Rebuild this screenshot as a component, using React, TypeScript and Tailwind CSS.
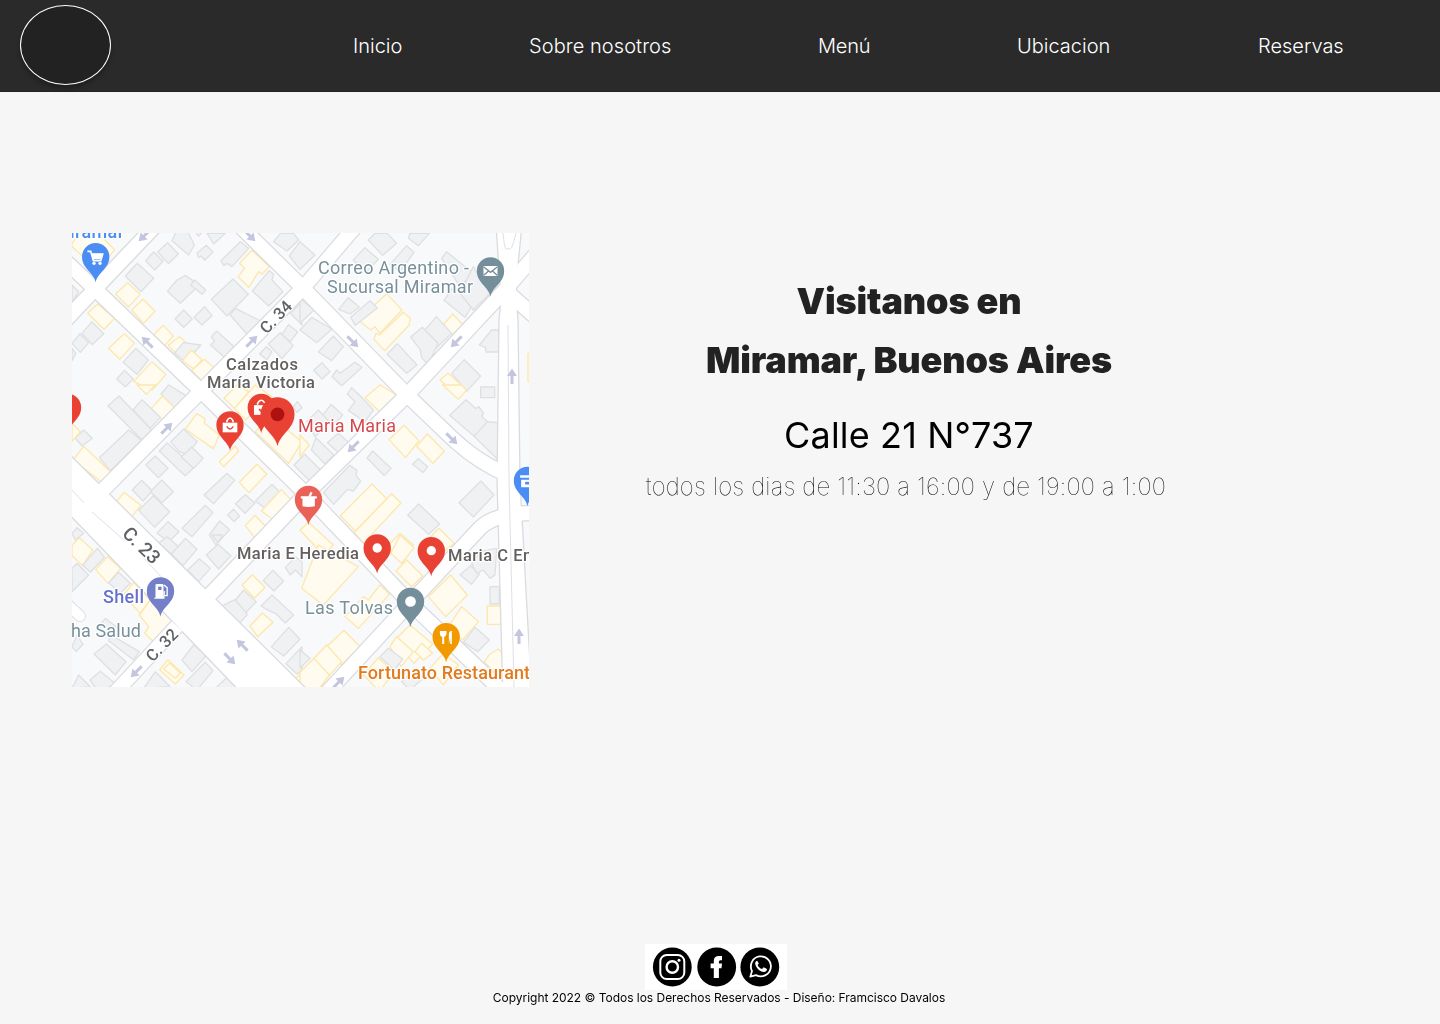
import React from "react";

type Shape = [string, string];

const links = [
  { label: "Inicio", box: "w-[176px]" },
  { label: "Sobre nosotros", box: "w-[289px] tracking-[0.07px]" },
  { label: "Menú", box: "w-[199px] tracking-[-0.2px]" },
  { label: "Ubicacion", box: "w-[241px]" },
  { label: "Reservas", box: "w-[120px]" },
];

/* Each sheet is drawn at three times map scale; g = grey building, y = commercial building. */
const sheets: { at: string; shapes: Shape[] }[] = [
  {
    at: "translate(72 230) scale(.33333)",
    shapes: [
      ["y", "0,40 25,5 75,5 128,60 112,78 80,45 50,95 0,50"],
      ["g", "196,100 245,145 207,185 160,138"],
      ["g", "245,66 273,94 248,120 221,92"],
      ["g", "287,38 319,72 289,101 257,66"],
      ["g", "315,0 345,0 367,45 350,75 300,32"],
      ["g", "403,46 423,66 398,91 388,78 380,82 375,69"],
      ["g", "365,0 395,0 380,18"],
      ["g", "405,10 425,42 460,10"],
      ["g", "505,35 530,55 480,110 465,100 455,107 447,92"],
      ["y", "540,61 592,110 570,132 560,125 530,172 498,140 518,115 503,100"],
      ["g", "340,137 368,155 372,175 325,220 286,184 315,150"],
      ["g", "368,150 401,180 390,193 356,165"],
      ["g", "483,147 529,193 465,258 418,208"],
      ["g", "592,122 605,133 600,150 633,185 590,228 541,183"],
      ["g", "490,235 560,270 567,280 530,318 474,255"],
      ["g", "605,35 625,10 665,10 680,30 645,63"],
      ["g", "690,215 655,250 690,285"],
      ["g", "335,240 361,267 335,292 309,267"],
      ["g", "398,230 420,257 390,285 366,262"],
      ["y", "167,158 204,193 169,231 131,192"],
      ["y", "213,208 249,244 215,280 179,240"],
      ["y", "77,222 128,265 96,298 47,250"],
      ["y", "274,286 304,318 277,347 245,314"],
      ["y", "322,320 345,340 315,374 289,346"],
      ["g", "334,338 387,345 340,397 308,369"],
      ["y", "358,360 390,389 365,417 332,392"],
      ["y", "397,388 425,412 388,452 359,421"],
      ["g", "434,303 490,354 466,390 416,345 428,333 418,321"],
      ["g", "583,350 600,365 585,390 563,371"],
      ["g", "625,308 664,347 630,386 589,342"],
      ["g", "650,284 677,306 655,335 630,314"],
      ["g", "0,165 20,185 0,218"],
      ["g", "60,275 95,311 61,344 30,310"],
      ["g", "24,311 50,338 25,367 0,340"],
      ["y", "157,311 187,340 143,388 110,355"],
      ["g", "191,355 229,390 195,433 153,397"],
      ["g", "157,421 184,447 160,470 134,447"],
      ["y", "240,395 282,434 240,480 185,455"],
      ["g", "0,355 12,370 0,392"],
    ],
  },
  {
    at: "translate(300 230) scale(.33333)",
    shapes: [
      ["g", "225,10 205,30 248,76 290,40 262,10"],
      ["g", "330,10 325,25 355,47 388,10"],
      ["g", "-32,78 0,35 45,75 0,118"],
      ["g", "195,53 235,88 195,130 160,90"],
      ["g", "320,47 342,67 318,100 300,125 270,103"],
      ["g", "440,65 520,130 480,170 425,85"],
      ["g", "462,168 516,228 495,262 432,211"],
      ["g", "520,110 570,190 520,240 480,190"],
      ["y", "260,191 306,240 240,310 225,290 212,300 175,270"],
      ["y", "310,247 331,265 327,286 254,362 222,328 228,310 238,315"],
      ["g", "145,203 178,231 150,252 116,238"],
      ["g", "210,212 232,234 166,286 152,262"],
      ["g", "0,205 42,240 0,280"],
      ["g", "35,262 96,297 50,338 0,300"],
      ["g", "100,318 130,350 95,392 55,366"],
      ["g", "66,398 90,425 66,447 41,421"],
      ["g", "165,397 186,412 125,467 96,440 110,420 120,430"],
      ["y", "458,252 489,284 457,314 431,283"],
      ["g", "409,260 455,310 408,355 366,310"],
      ["g", "367,292 414,340 385,405 365,383 360,358 332,321"],
      ["g", "292,341 351,405 320,430 261,373"],
      ["g", "595,300 600,366 558,366 556,352 538,345 575,300"],
      ["g", "493,389 542,438 500,484 455,430"],
      ["y", "444,430 484,465 465,490 420,450"],
      ["y", "690,370 684,370 684,455 690,455"],
    ],
  },
  {
    at: "translate(72 385) scale(.33333)",
    shapes: [
      ["y", "195,0 250,0 223,28"],
      ["g", "290,0 342,32 308,69 267,27"],
      ["y", "272,33 309,70 271,105 238,70"],
      ["g", "210,44 265,97 235,130 183,75"],
      ["g", "141,33 239,135 210,165 108,62"],
      ["g", "170,135 208,166 115,257 82,218"],
      ["g", "35,135 61,160 30,183 10,159"],
      ["y", "0,115 25,140 0,170"],
      ["y", "35,184 120,265 95,296 3,225"],
      ["y", "374,86 398,100 397,115 442,150 424,191 340,132"],
      ["g", "335,132 376,170 345,208 322,200 296,170"],
      ["g", "286,174 367,247 339,272 262,198"],
      ["g", "359,186 393,220 365,250 328,216"],
      ["g", "250,213 288,250 259,278 221,239"],
      ["y", "490,183 500,199 455,245 442,230"],
      ["y", "555,238 584,267 531,323 502,292"],
      ["g", "465,265 488,286 425,356 396,330"],
      ["g", "209,286 241,318 213,348 181,315"],
      ["g", "269,285 304,320 270,353 235,320"],
      ["y", "156,322 206,361 178,397 127,359"],
      ["g", "244,332 293,380 248,427 200,376"],
      ["g", "600,298 622,320 577,368 550,348"],
      ["g", "520,329 549,354 519,385 490,356"],
      ["g", "485,373 503,393 486,410 467,390"],
      ["y", "628,314 662,350 606,406 568,378"],
      ["g", "400,361 423,383 360,455 330,430"],
      ["g", "443,408 473,434 432,480 412,450"],
      ["y", "549,391 583,426 550,460 520,422"],
      ["g", "288,410 321,440 290,470 255,445"],
      ["y", "495,0 530,20 488,70 456,40"],
      ["y", "550,0 600,35 520,105 487,70"],
      ["y", "575,115 610,105 690,170 650,235 550,140"],
      ["g", "676,50 690,68 675,82 663,67"],
      ["g", "15,428 35,445 10,465 0,445"],
    ],
  },
  {
    at: "translate(300 385) scale(.33333)",
    shapes: [
      ["y", "240,0 290,30 240,82 195,38"],
      ["g", "155,8 188,40 220,75 195,110 145,77 165,50 142,28"],
      ["g", "93,58 128,90 98,125 65,95"],
      ["g", "55,75 90,112 45,155 20,110"],
      ["y", "0,150 28,180 0,215"],
      ["g", "115,145 155,180 125,212 82,173"],
      ["g", "48,158 102,210 75,237 34,195"],
      ["g", "14,208 65,258 35,294 -18,240"],
      ["y", "312,121 357,167 317,218 267,164"],
      ["y", "382,147 433,199 399,235 350,184"],
      ["g", "218,198 273,250 253,272 201,219"],
      ["g", "355,221 383,245 370,263 338,238"],
      ["g", "149,241 171,256 168,272 182,288 160,318 143,313 101,358 70,323"],
      ["y", "216,297 261,342 166,438 121,392"],
      ["y", "275,326 303,354 190,475 162,443"],
      ["g", "543,288 582,330 520,396 477,353"],
      ["g", "356,357 419,417 386,448 323,391"],
      ["y", "417,430 462,475 420,510 383,465"],
      ["y", "300,445 340,480 300,520 260,485"],
      ["g", "498,44 526,70 537,66 551,85 545,94 563,110 524,155 449,91"],
      ["g", "563,110 600,114 600,230 522,154"],
      ["g", "542,6 584,6 584,38 542,38"],
      ["y", "428,0 484,0 500,15 475,43"],
      ["y", "0,435 25,412 100,480 70,510"],
    ],
  },
  {
    at: "translate(72 535) scale(.33333)",
    shapes: [
      ["y", "22,8 62,45 32,92 0,62 0,30"],
      ["g", "76,40 98,67 55,112 32,90"],
      ["g", "15,85 50,120 0,170 0,100"],
      ["y", "107,65 146,100 108,145 71,104"],
      ["g", "140,112 175,145 145,175 110,143"],
      ["y", "185,142 235,195 205,235 155,180"],
      ["y", "235,195 312,264 255,330 218,295 230,275 202,240"],
      ["g", "285,5 320,35 300,58 260,25"],
      ["g", "340,10 375,43 333,92 298,57"],
      ["g", "382,71 415,100 380,140 347,105"],
      ["g", "438,28 477,62 440,102 403,60"],
      ["g", "420,0 452,0 438,22"],
      ["g", "490,193 520,215 525,240 502,265 446,215"],
      ["g", "515,165 553,200 522,232 490,195"],
      ["y", "541,119 579,157 548,189 510,151"],
      ["g", "602,106 635,138 606,168 574,137"],
      ["g", "600,180 665,240 640,264 610,235 590,227 567,213"],
      ["y", "571,234 603,262 557,305 534,273"],
      ["g", "650,277 684,313 635,363 598,335"],
      ["g", "690,335 642,386 675,417 690,405"],
      ["g", "670,65 690,80 690,125 670,105 655,120 640,98"],
      ["g", "365,330 404,360 360,410 330,375"],
      ["g", "400,382 423,407 375,465 342,440"],
      ["y", "288,374 336,420 310,447 263,405"],
      ["y", "293,384 325,415 310,430 275,402"],
      ["g", "250,410 293,454 215,460"],
      ["g", "466,426 510,465 425,465"],
      ["g", "117,300 202,350 185,375 110,317"],
      ["g", "103,327 162,380 130,420 66,357"],
      ["g", "85,409 135,450 75,465 54,435"],
      ["g", "100,250 138,280 110,305 78,275"],
      ["g", "15,300 33,328 12,350 0,335"],
      ["g", "20,420 55,455 0,460"],
      ["y", "690,410 672,430 690,450"],
    ],
  },
  {
    at: "translate(300 535) scale(.33333)",
    shapes: [
      ["y", "55,30 175,95 70,210 5,160"],
      ["y", "240,150 268,178 175,280 135,245 190,185 205,195"],
      ["y", "300,0 342,38 305,85 272,55"],
      ["y", "320,75 368,122 335,155 288,108"],
      ["y", "452,120 502,180 437,245 385,185"],
      ["y", "485,215 536,260 487,315 445,275"],
      ["g", "512,92 538,118 514,148 480,119"],
      ["g", "540,50 590,40 585,120 570,130 550,105 530,115 515,85"],
      ["g", "570,155 598,155 598,207 570,207"],
      ["y", "562,213 603,213 603,268 562,268"],
      ["g", "525,277 568,315 533,350 490,322"],
      ["y", "330,270 398,327 342,385 305,345 275,325"],
      ["y", "290,305 340,350 303,395 270,335"],
      ["y", "365,325 398,355 370,375 345,350"],
      ["g", "265,340 308,372 283,405 240,365"],
      ["y", "132,286 180,335 125,390 80,335"],
      ["y", "80,330 125,380 85,425 42,370"],
      ["y", "42,370 88,420 55,465 0,460 0,412"],
      ["g", "0,345 30,370 0,400"],
      ["y", "235,368 280,410 240,470 190,420"],
      ["y", "430,355 475,390 430,450 390,400"],
      ["y", "595,342 615,362 612,400 580,410 553,380 570,357"],
      ["g", "340,405 370,430 330,465 305,440"],
    ],
  },
];

const streets = [
  "M60 326L95 289L155 226",
  "M60 256L95 289L201 391L305 493L410 603L505 694",
  "M355 227L303 288L201 391L99 494",
  "M240 226L303 288L407 395L452 438Q477 462 510 476",
  "M535 255L505 290L407 395L305 495L205 600",
  "M505 290L540 321",
  "M177 626L112 696",
  "M322 698L410 603L480 528Q496 512 540 513",
];

const arrows: [number, number, number][] = [
  [144, 236, 135], [250, 236, 45], [147, 342, -135], [252, 341, -45],
  [353, 342, 45], [456, 342, 135], [167, 428, -45], [353, 447, 135],
  [452, 439, 45], [512, 376, -90], [242, 645, -135], [230, 659, 45],
  [136, 672, 135], [339, 682, -45], [519, 636, -90],
];

const pinPath = "M0 77C-5 48-41 36-41 0A41 41 0 1 1 41 0C41 36 5 48 0 77Z";

function Pin({ x, y, fill, scale = 0.3333, children }: { x: number; y: number; fill: string; scale?: number; children?: React.ReactNode }) {
  return (
    <g transform={`translate(${x} ${y}) scale(${scale})`}>
      <path d={pinPath} fill={fill} />
      {children}
    </g>
  );
}

function StreetMap() {
  return (
    <svg className="h-[454px] w-[457px] overflow-hidden" viewBox="72 233 457 454" fontFamily="Roboto, sans-serif">
      <rect x="72" y="233" width="457" height="454" fill="#f8f9fb" />
      <g className="blur-[0.5px]">
      {sheets.map((s) => (
        <g key={s.at} transform={s.at} strokeWidth="4" strokeLinejoin="round">
          {s.shapes.map(([kind, points], i) => (
            <polygon key={i} points={points} fill={kind === "y" ? "#fffbee" : "#f0f1f3"} stroke={kind === "y" ? "#fde7ac" : "#dfe0e3"} />
          ))}
        </g>
      ))}
      <g fill="none" stroke="#dadbe0" strokeWidth="16.5">
        {streets.map((d) => <path key={d} d={d} />)}
      </g>
      <path d="M60 445L320 702H250L60 505Z" fill="#fff" stroke="#dadbe0" strokeWidth="1.3" />
      <path d="M496 225L499 270Q502 300 499 320L497 480L503 700H532L520 480L518 320Q515 290 518 265L522 225Z" fill="#fff" stroke="#dadbe0" strokeWidth="1.3" />
      <g fill="none" stroke="#fff" strokeWidth="14">
        {streets.map((d) => <path key={d} d={d} />)}
      </g>
      <path d="M72 490L84 503M92 512L125 541M139 553L166 582M508 325L509 480L514 687M503 233Q505 255 508 248Q511 255 516 233M505 233" fill="none" stroke="#dfe0e5" />
      <path d="M66 603L80 616" stroke="#dfe0e5" strokeWidth="12" strokeLinecap="round" />
      <path d="M66 603L80 616" stroke="#fff" strokeWidth="10" strokeLinecap="round" />
      {arrows.map(([x, y, r], i) => (
        <path key={i} transform={`translate(${x} ${y}) rotate(${r})`} d="M-8-1.5H0V-5L7.5 0L0 5V1.5H-8Z" fill="#c3c6de" />
      ))}

      <g stroke="#fff" strokeWidth="2.5" strokeLinejoin="round" paintOrder="stroke" fontSize="18">
        <text x="70" y="238" fill="#4a90f2" fontWeight="500" textLength="54">iramar</text>
        <g fill="#78909c">
          <text x="318" y="273.5" textLength="151">Correo Argentino -</text>
          <text x="327" y="292.5" textLength="146">Sucursal Miramar</text>
          <text x="305" y="613.5" textLength="88">Las Tolvas</text>
          <text x="71" y="637" textLength="70">ha Salud</text>
        </g>
        <g fill="#63605e" fontSize="16.5" fontWeight="500">
          <text x="226" y="370" textLength="72">Calzados</text>
          <text x="207" y="388" textLength="108">María Victoria</text>
          <text x="237" y="559" textLength="122">Maria E Heredia</text>
          <text x="448" y="560.5" textLength="94">Maria C Emi</text>
        </g>
        <text x="298" y="431.5" fill="#d4494d" textLength="98">Maria Maria</text>
        <text x="103" y="603" fill="#6670d0" fontWeight="500" textLength="41">Shell</text>
        <text x="358" y="678.5" fill="#e37a1c" fontWeight="500" textLength="172">Fortunato Restaurant</text>
        <g fill="#5f6368" textAnchor="middle" fontSize="16.5" fontWeight="500">
          <text transform="translate(280 321) rotate(-46)">C. 34</text>
          <text transform="translate(166 649) rotate(-46)">C. 32</text>
          <text transform="translate(137 550) rotate(44)" fontSize="19">C. 23</text>
        </g>
      </g>

      <Pin x={95.7} y={256.7} fill="#4a8df5">
        <path d="M-25-16H-15L-7 12H15L21-8H-12" fill="none" stroke="#fff" strokeWidth="5" />
        <path d="M-12-9H20L14 8H-8Z" fill="#fff" />
        <circle cx="-5" cy="20" r="5" fill="#fff" /><circle cx="13" cy="20" r="5" fill="#fff" />
      </Pin>
      <Pin x={490.5} y={271} fill="#748e9a">
        <rect x="-21" y="-15" width="42" height="30" rx="2" fill="#fff" />
        <path d="M-20-12L0 4L20-12M-20 13L-6 0M20 13L6 0" fill="none" stroke="#748e9a" strokeWidth="4" />
      </Pin>
      <Pin x={67.5} y={407.5} fill="#e94235"><circle r="13" fill="#b3130f" /></Pin>
      <Pin x={230} y={425} fill="#e94235">
        <path d="M-22-7H22V22H-22Z" fill="#fff" />
        <path d="M-9-8V-13Q0-29 9-13V-8" fill="none" stroke="#fff" strokeWidth="5" />
        <path d="M-10 4Q0 20 10 4" fill="none" stroke="#e94235" strokeWidth="4" />
      </Pin>
      <Pin x={261.3} y={407.5} fill="#e94235">
        <path d="M-22-7H22V22H-22Z" fill="#fff" />
        <path d="M-11-8V-13Q0-30 10-14" fill="none" stroke="#fff" strokeWidth="5" />
        <path d="M-6 4Q0 18 14 10" fill="none" stroke="#e94235" strokeWidth="5" />
      </Pin>
      <Pin x={277.5} y={414.3} fill="#e94235" scale={0.415}><circle r="16.5" fill="#ae120e" /></Pin>
      <Pin x={308.5} y={499.5} fill="#ea6257">
        <path d="M-23-10H25V-3H19V20Q0 25-18 20V-3H-23Z" fill="#fff" />
        <path d="M2-6L9-22" stroke="#fff" strokeWidth="7" />
      </Pin>
      <Pin x={377.2} y={548} fill="#e94235"><circle r="14" fill="#fff" /></Pin>
      <Pin x={431.3} y={550.7} fill="#e94235"><circle r="14" fill="#fff" /></Pin>
      <Pin x={410.5} y={601.5} fill="#748e9a"><circle r="16" fill="#fff" /></Pin>
      <Pin x={160.5} y={591} fill="#747fca">
        <path d="M-15 20V-17Q-15-21-11-21H5Q9-21 9-17V16H12V23H-19V20Z" fill="#fff" />
        <rect x="-7" y="-13" width="10" height="10" fill="#747fca" />
        <path d="M10-18L20-10V14H11V0" fill="none" stroke="#fff" strokeWidth="4" />
      </Pin>
      <Pin x={446.2} y={636.7} fill="#f29900">
        <path d="M-9-17V22" stroke="#fff" strokeWidth="6" />
        <path d="M-19-17H1V-9Q-2 1-9 1Q-18 1-19-9Z" fill="#fff" />
        <path d="M8 22V-10Q10-18 17-17V22H12V4Z" fill="#fff" />
      </Pin>
      <Pin x={527.5} y={480.5} fill="#4a8df5">
        <path d="M-22-16H23V-8H-22ZM-19-2H22V20H-19Z" fill="#fff" />
        <rect x="-7" y="4" width="12" height="8" fill="#4a8df5" />
      </Pin>
      </g>
    </svg>
  );
}

function SocialIcons() {
  return (
    <svg className="h-[46px] w-[142px] bg-white" viewBox="0 0 142 46" aria-label="Redes sociales">
      <circle cx="27.3" cy="23" r="19.4" />
      <circle cx="71.7" cy="23" r="19.4" />
      <circle cx="114.8" cy="23" r="19.4" />
      <g fill="none" stroke="#fff" strokeWidth="2">
        <rect x="15.3" y="11" width="24" height="24" rx="6.5" />
        <circle cx="27.3" cy="23" r="5.7" strokeWidth="2.4" />
      </g>
      <circle cx="34" cy="16.3" r="1.5" fill="#fff" />
      <path d="M68.8 34V24.2H65.6V19.6H68.8V17Q68.8 12 74 12H77V16.2H75.3Q73.9 16.2 73.9 17.9V19.6H77L76.5 24.2H73.9V34Z" fill="#fff" />
      <path d="M105.3 32.7L107 27A10 10 0 1 1 111 31.1Z" fill="none" stroke="#fff" strokeWidth="1.8" strokeLinejoin="round" />
      <path d="M112.2 16.8C110.5 17 109.7 19 110.5 21C112 25 115.4 27.8 119 28C120.8 28 122 26.7 122 25.1L118.6 23.3L117.1 25.1C115 24.4 113.5 22.9 112.6 20.9L113.8 19.5Z" fill="#fff" />
    </svg>
  );
}

export default function App() {
  return (
    <div className="flex h-[1024px] w-[1440px] flex-col overflow-hidden bg-[#f6f6f6] font-['Inter',sans-serif] text-black">
      <header className="flex h-[92px] shrink-0 border-b border-[#222] bg-[#2a2a2a]">
        <div className="mt-[5px] ml-5 h-20 w-[91px] rounded-[50%] border border-white bg-[#222] shadow-[0_4px_4px_rgba(0,0,0,0.25)]" />
        <nav className="ml-[242px] flex items-center pt-px text-xl font-light text-white">
          {links.map((link) => (
            <a key={link.label} href="#" className={`${link.box} shrink-0 whitespace-nowrap`}>{link.label}</a>
          ))}
        </nav>
      </header>
      <main className="flex flex-1 items-start pt-[141px] pl-[72px]">
        <StreetMap />
        <section className="ml-[80px] flex w-[600px] flex-col items-center pt-[39px] text-center whitespace-nowrap">
          <h1 className="text-[36px] leading-[59px] font-black tracking-[-0.13px] text-[#222]">
            <span className="block">Visitanos en</span>
            <span className="block">Miramar, Buenos Aires</span>
          </h1>
          <p className="mt-[22px] text-[36px] leading-[46px] tracking-[0.15px]">Calle 21 N°737</p>
          <p className="mt-[11px] pr-[6px] text-[24px] leading-[36px] font-thin tracking-[0.17px]">todos los dias de 11:30 a 16:00 y de 19:00 a 1:00</p>
        </section>
      </main>
      <footer className="flex h-20 shrink-0 flex-col items-center">
        <div className="mr-[8px]"><SocialIcons /></div>
        <p className="mr-[2px] text-xs leading-4 tracking-[-0.03px]">Copyright 2022 © Todos los Derechos Reservados - Diseño: Framcisco Davalos</p>
      </footer>
    </div>
  );
}
